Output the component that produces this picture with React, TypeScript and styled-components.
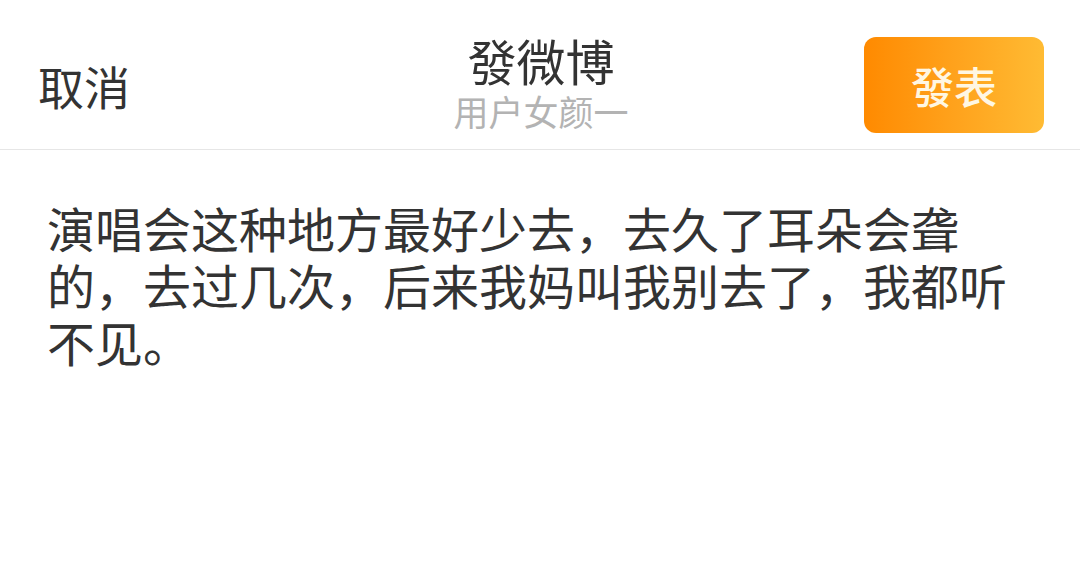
import styled, { createGlobalStyle } from "styled-components";

const GlobalStyle = createGlobalStyle`
  html, body {
    margin: 0;
    padding: 0;
    background: #ffffff;
  }
  body {
    font-family: "Noto Sans CJK SC", "Noto Sans", sans-serif;
    color: #333333;
  }
`;

const Page = styled.div`
  width: 100%;
  min-height: 100vh;
  background: #ffffff;
`;

const Header = styled.header`
  display: flex;
  align-items: center;
  justify-content: space-between;
  height: 150px;
  padding: 20px 36px 0 38px;
  box-sizing: border-box;
  border-bottom: 1px solid #e6e6e6;
`;

const Cancel = styled.button`
  border: none;
  background: none;
  padding: 0;
  font-family: inherit;
  font-size: 46px;
  line-height: 1;
  color: #333333;
  width: 180px;
  text-align: left;
  cursor: pointer;
`;

const TitleBlock = styled.div`
  align-self: flex-start;
  margin-top: 9px;
  display: flex;
  flex-direction: column;
  align-items: center;
`;

const Title = styled.div`
  font-size: 49px;
  line-height: 62px;
  color: #333333;
`;

const Subtitle = styled.div`
  font-size: 35px;
  line-height: 40px;
  color: #b3b3b3;
`;

const SendButton = styled.button`
  display: flex;
  align-items: center;
  justify-content: center;
  width: 180px;
  height: 96px;
  border: none;
  border-radius: 12px;
  background: linear-gradient(90deg, #ff8a00 0%, #ffa21c 50%, #ffbb33 100%);
  color: #fff7e3;
  font-family: inherit;
  font-size: 43px;
  font-weight: 500;
  cursor: pointer;
`;

const Body = styled.div`
  padding: 49px 47px 0 47px;
  font-size: 48px;
  line-height: 57px;
  color: #333333;
`;

const App = () => {
  return (
    <Page>
      <GlobalStyle />
      <Header>
        <Cancel>取消</Cancel>
        <TitleBlock>
          <Title>發微博</Title>
          <Subtitle>用户女颜一</Subtitle>
        </TitleBlock>
        <SendButton>發表</SendButton>
      </Header>
      <Body>
        演唱会这种地方最好少去，去久了耳朵会聋的，去过几次，后来我妈叫我别去了，我都听不见。
      </Body>
    </Page>
  );
};

export default App;
